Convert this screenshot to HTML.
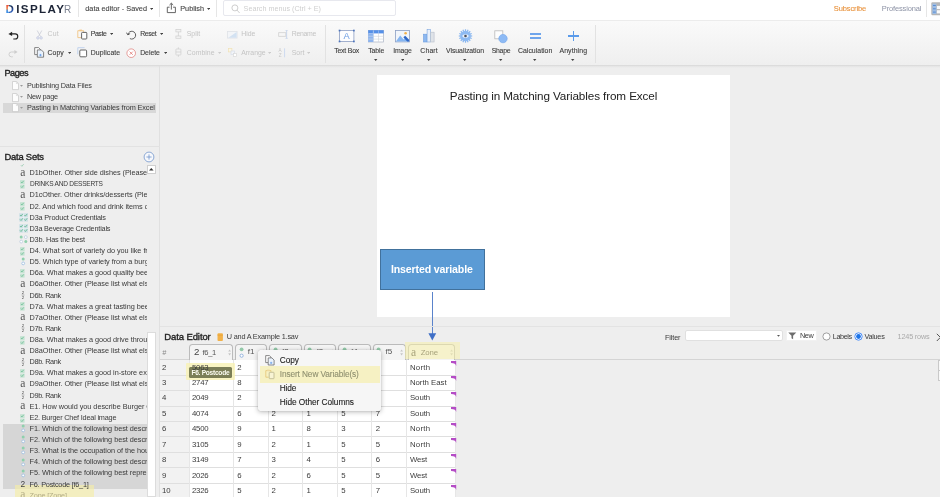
<!DOCTYPE html><html><head><meta charset="utf-8"><title>Displayr - data editor</title><style>
html,body{margin:0;padding:0}
body{width:940px;height:497px;overflow:hidden;position:relative;background:#eeeeee;font-family:"Liberation Sans",sans-serif;}
#r{position:absolute;left:0;top:0;width:940px;height:497px;overflow:hidden;will-change:transform;}
#r div,#r svg,#r span{position:absolute;display:block}
#r span{white-space:pre;}


.m{-webkit-text-stroke:0.1px currentColor}
.h{-webkit-text-stroke:0.35px currentColor}

</style></head><body><div id="r">
<div style="left:0px;top:0px;width:940.00px;height:20.50px;background:#ffffff;"></div>
<div style="left:0px;top:20.2px;width:940.00px;height:1.00px;background:#ececec;"></div>
<div style="left:0px;top:21px;width:940.00px;height:44.30px;background:linear-gradient(#fafafa,#efefef);"></div>
<div style="left:0px;top:65.2px;width:940.00px;height:1.00px;background:#dcdcdc;"></div>
<div style="left:0px;top:66.2px;width:940.00px;height:2.30px;background:linear-gradient(#e4e4e4,#eeeeee);"></div>
<div style="left:77.5px;top:0px;width:1.00px;height:17.00px;background:#e6e6e6;"></div>
<div style="left:158.9px;top:0px;width:1.00px;height:17.00px;background:#e6e6e6;"></div>
<div style="left:215.5px;top:0px;width:1.00px;height:17.00px;background:#e6e6e6;"></div>
<div style="left:926.2px;top:0px;width:1.00px;height:17.00px;background:#e6e6e6;"></div>
<span style="left:5.6px;top:1.45px;font-size:11.6px;line-height:15.1px;color:#1c2436;font-weight:bold;letter-spacing:1.397px;"><span style="position:static;display:inline-block;letter-spacing:0;margin-right:2.22px;background:linear-gradient(#e94f3d 28%,#ef8448 50%,#3d8fe4 64%) left/36% 100% no-repeat,linear-gradient(165deg,#1f9bb5 12%,#1c2c58 38%,#2a55a8 62%,#3c7fe0 90%) right/64% 100% no-repeat;-webkit-background-clip:text;background-clip:text;color:transparent;">D</span>ISPLAY<span style="position:static;display:inline-block;letter-spacing:0;font-weight:normal;color:#7b8190;margin-left:-1.2px;transform:scaleX(0.86);transform-origin:0 50%;">R</span></span>
<svg style="left:149.7px;top:8.45px;" width="3.2" height="1.9" viewBox="0 0 3.2 1.9"><path d="M0 0H3.2L1.6 1.9Z" fill="#444"/></svg>
<svg style="left:206.7px;top:8.45px;" width="3.2" height="1.9" viewBox="0 0 3.2 1.9"><path d="M0 0H3.2L1.6 1.9Z" fill="#444"/></svg>
<svg style="left:166px;top:2px;" width="11" height="12" viewBox="0 0 11 12"><path d="M3.6 5.2H1.3V10.6H9.4V5.2H7.1" fill="none" stroke="#555" stroke-width="0.9"/><path d="M5.35 7.6V1.3M3.5 3L5.35 1.2L7.2 3" fill="none" stroke="#555" stroke-width="0.9"/></svg>
<div style="left:223px;top:0.3px;width:172.50px;height:15.90px;background:#fff;border:1px solid #e7e8ee;border-radius:2px;box-sizing:border-box;"></div>
<svg style="left:230.8px;top:4.2px;" width="10" height="10" viewBox="0 0 10 10"><circle cx="3.9" cy="3.9" r="3" fill="none" stroke="#c2c2c2" stroke-width="0.8"/><path d="M6 6.1L8.6 9" stroke="#c2c2c2" stroke-width="0.8"/></svg>
<svg style="left:931.3px;top:2.2px;" width="9" height="14" viewBox="0 0 9 14"><rect x="0.3" y="0.3" width="10" height="13" rx="1.2" fill="#b6b6b6"/><rect x="1.3" y="1.6" width="4.2" height="10.4" fill="#9fbde3"/><path d="M2 3.5H4.8M2 6.8H4.8M2 10.1H4.8" stroke="#5a8fd6" stroke-width="1"/><rect x="5.9" y="3.9" width="4" height="3.2" fill="#fafafa"/><rect x="5.9" y="8.2" width="4" height="3.2" fill="#fafafa"/></svg>
<div style="left:24.2px;top:24.5px;width:1.00px;height:38.00px;background:#e2e2e2;"></div>
<div style="left:325.2px;top:24.5px;width:1.00px;height:38.00px;background:#e2e2e2;"></div>
<div style="left:595.3px;top:24.5px;width:1.00px;height:38.00px;background:#e2e2e2;"></div>
<svg style="left:8px;top:30.5px;" width="11" height="10" viewBox="0 0 11 10"><path d="M3.6 2.9H7.2A2.55 2.55 0 0 1 7.2 8H5.3" fill="none" stroke="#222" stroke-width="1.15"/><path d="M0.4 2.9L4.1 0.7V5.1Z" fill="#222"/></svg>
<svg style="left:8px;top:49px;" width="11" height="10" viewBox="0 0 11 10"><path d="M6.6 3H3.4A2.4 2.4 0 0 0 3.4 7.8H4.8" fill="none" stroke="#cdcdcd" stroke-width="0.95"/><path d="M9.6 3L6.4 1.1V4.9Z" fill="#cdcdcd"/></svg>
<svg style="left:35.5px;top:30px;" width="7" height="10" viewBox="0 0 7 10"><path d="M1.2 0.5L4.6 6.6M5.8 0.5L2.4 6.6" stroke="#c9ccd6" stroke-width="0.8" fill="none"/><circle cx="1.9" cy="7.9" r="1.3" fill="#dfe3f2" stroke="#c3c9de" stroke-width="0.6"/><circle cx="5.1" cy="7.9" r="1.3" fill="#dfe3f2" stroke="#c3c9de" stroke-width="0.6"/></svg>
<svg style="left:76.5px;top:29.3px;" width="11" height="11" viewBox="0 0 11 11"><path d="M4.2 8.6H0.8V1.7H6.6V3.2" fill="none" stroke="#f1c17c" stroke-width="0.85"/><rect x="2.4" y="0.6" width="2.6" height="1.6" fill="#f5c98a"/><rect x="4.6" y="3.4" width="5.2" height="6.6" rx="0.8" fill="#fff" stroke="#555" stroke-width="0.9"/></svg>
<svg style="left:110.1px;top:33.25px;" width="3.2" height="1.9" viewBox="0 0 3.2 1.9"><path d="M0 0H3.2L1.6 1.9Z" fill="#444"/></svg>
<svg style="left:126.2px;top:29.5px;" width="11" height="10" viewBox="0 0 11 10"><path d="M1.9 4.6A3.9 3.9 0 1 1 3.9 8.6" fill="none" stroke="#444" stroke-width="0.85"/><path d="M0.4 2.6L1.9 4.9L4.1 3.5" fill="none" stroke="#444" stroke-width="0.85"/></svg>
<svg style="left:159.5px;top:33.25px;" width="3.2" height="1.9" viewBox="0 0 3.2 1.9"><path d="M0 0H3.2L1.6 1.9Z" fill="#444"/></svg>
<svg style="left:174.6px;top:29.4px;" width="7" height="10" viewBox="0 0 7 10"><rect x="0.9" y="0.6" width="5" height="2.3" fill="#f3f3f3" stroke="#cfcfcf" stroke-width="0.7"/><rect x="0.9" y="7" width="5" height="2.3" fill="#f3f3f3" stroke="#cfcfcf" stroke-width="0.7"/><path d="M3.4 3V7" stroke="#cfcfcf" stroke-width="0.7"/></svg>
<svg style="left:227px;top:30.7px;" width="11" height="8" viewBox="0 0 11 8"><rect x="0.5" y="0.5" width="9.6" height="6.6" fill="#f3f5f8" stroke="#dfe2e7" stroke-width="0.8"/><path d="M1.4 6.8L9.6 1V6.8Z" fill="#d3e2f2"/></svg>
<svg style="left:277.5px;top:30px;" width="11" height="9" viewBox="0 0 11 9"><path d="M0.6 2.6H7.8V6.4H0.6Z" fill="#f6f6f6" stroke="#d0d0d0" stroke-width="0.8"/><path d="M8.6 0.4V8.4" stroke="#c6d4ea" stroke-width="0.9"/><path d="M7.4 0.4H9.8M7.4 8.4H9.8" stroke="#c6d4ea" stroke-width="0.7"/></svg>
<svg style="left:33.8px;top:47.4px;" width="11" height="11" viewBox="0 0 11 11"><path d="M3 7.6H0.7V0.6H4.6L6.3 2.3V3" fill="#fff" stroke="#666" stroke-width="0.8"/><path d="M3.3 2.9H7.3L9.6 5.2V10.2H3.3Z" fill="#eaf2fc" stroke="#666" stroke-width="0.8"/><path d="M5.2 8.1H7.7M6.45 6.9V9.3" stroke="#5b95e4" stroke-width="0.75"/></svg>
<svg style="left:67.6px;top:52.05px;" width="3.2" height="1.9" viewBox="0 0 3.2 1.9"><path d="M0 0H3.2L1.6 1.9Z" fill="#444"/></svg>
<svg style="left:76.5px;top:47.4px;" width="11" height="11" viewBox="0 0 11 11"><path d="M0.8 7.4V0.7H7.6" fill="none" stroke="#bcd0ee" stroke-width="0.9"/><rect x="2.8" y="3" width="6.8" height="6.8" rx="1" fill="#fff" stroke="#555" stroke-width="0.9"/></svg>
<svg style="left:126.2px;top:47.6px;" width="11" height="11" viewBox="0 0 11 11"><circle cx="5.2" cy="5.2" r="4.3" fill="#fff" stroke="#dc6a66" stroke-width="0.65"/><path d="M3.6 3.6L6.8 6.8M6.8 3.6L3.6 6.8" stroke="#dc6a66" stroke-width="0.7"/></svg>
<svg style="left:163.7px;top:52.05px;" width="3.2" height="1.9" viewBox="0 0 3.2 1.9"><path d="M0 0H3.2L1.6 1.9Z" fill="#444"/></svg>
<svg style="left:174.6px;top:47.4px;" width="7" height="11" viewBox="0 0 7 11"><rect x="0.9" y="2" width="5" height="6" rx="0.6" fill="#f3f3f3" stroke="#cfcfcf" stroke-width="0.7"/><path d="M3.4 0.3V2M3.4 8V9.9M0.9 5H5.9" stroke="#cfcfcf" stroke-width="0.7"/></svg>
<svg style="left:218.1px;top:52.05px;" width="3.2" height="1.9" viewBox="0 0 3.2 1.9"><path d="M0 0H3.2L1.6 1.9Z" fill="#ccc"/></svg>
<svg style="left:228px;top:48.3px;" width="10" height="10" viewBox="0 0 10 10"><rect x="0.5" y="0.5" width="3.4" height="3.4" fill="#fbf5e4" stroke="#f0e2b8" stroke-width="0.7"/><rect x="3" y="3" width="3.6" height="3.6" fill="#f1f4f9" stroke="#d8dde8" stroke-width="0.7"/><rect x="5.4" y="5.4" width="3.2" height="3.2" fill="#fff" stroke="#d8d8d8" stroke-width="0.7"/></svg>
<svg style="left:267.9px;top:52.05px;" width="3.2" height="1.9" viewBox="0 0 3.2 1.9"><path d="M0 0H3.2L1.6 1.9Z" fill="#ccc"/></svg>
<svg style="left:278px;top:47.8px;" width="10" height="10" viewBox="0 0 10 10"><path d="M6.6 0.3V9.3" stroke="#cddaf0" stroke-width="1"/></svg>
<svg style="left:306.9px;top:52.05px;" width="3.2" height="1.9" viewBox="0 0 3.2 1.9"><path d="M0 0H3.2L1.6 1.9Z" fill="#ccc"/></svg>
<svg style="left:374.3px;top:58.7px;" width="3.4" height="2" viewBox="0 0 3.4 2"><path d="M0 0H3.4L1.7 2Z" fill="#444"/></svg>
<svg style="left:400.8px;top:58.7px;" width="3.4" height="2" viewBox="0 0 3.4 2"><path d="M0 0H3.4L1.7 2Z" fill="#444"/></svg>
<svg style="left:427.3px;top:58.7px;" width="3.4" height="2" viewBox="0 0 3.4 2"><path d="M0 0H3.4L1.7 2Z" fill="#444"/></svg>
<svg style="left:463.3px;top:58.7px;" width="3.4" height="2" viewBox="0 0 3.4 2"><path d="M0 0H3.4L1.7 2Z" fill="#444"/></svg>
<svg style="left:499.3px;top:58.7px;" width="3.4" height="2" viewBox="0 0 3.4 2"><path d="M0 0H3.4L1.7 2Z" fill="#444"/></svg>
<svg style="left:533.3px;top:58.7px;" width="3.4" height="2" viewBox="0 0 3.4 2"><path d="M0 0H3.4L1.7 2Z" fill="#444"/></svg>
<svg style="left:571.3px;top:58.7px;" width="3.4" height="2" viewBox="0 0 3.4 2"><path d="M0 0H3.4L1.7 2Z" fill="#444"/></svg>
<svg style="left:338px;top:29px;" width="18" height="15" viewBox="0 0 18 15"><rect x="1.5" y="1.5" width="14.4" height="11" fill="#fdfdfe" stroke="#8d9fc4" stroke-width="0.8"/><rect x="0.7" y="0.7" width="1.7" height="1.7" fill="#4d74bb"/><rect x="15" y="0.7" width="1.7" height="1.7" fill="#4d74bb"/><rect x="0.7" y="11.6" width="1.7" height="1.7" fill="#4d74bb"/><rect x="15" y="11.6" width="1.7" height="1.7" fill="#4d74bb"/></svg>
<svg style="left:368px;top:30px;" width="16" height="13" viewBox="0 0 16 13"><rect x="0.4" y="0.4" width="15.2" height="11.6" fill="#fff" stroke="#a9b2c4" stroke-width="0.7"/><rect x="0.2" y="0.2" width="15.5" height="3.2" fill="#5590e8"/><rect x="0.2" y="3.4" width="5.2" height="8.6" fill="#8cb4ef"/><path d="M0.4 6.3H15.6M0.4 9.1H15.6M10.5 3.4V12" stroke="#cfd3da" stroke-width="0.6"/><path d="M5.4 0.4V12" stroke="#b9cdea" stroke-width="0.6"/><path d="M0.4 6.3H5.4M0.4 9.1H5.4M5.4 0.4V3.4M10.5 0.4V3.4" stroke="#a9c8f4" stroke-width="0.6"/></svg>
<svg style="left:395px;top:30px;" width="16" height="13" viewBox="0 0 16 13"><rect x="0.5" y="0.5" width="14" height="11.4" fill="#f1f5fb" stroke="#8c9fc4" stroke-width="0.8"/><circle cx="10.6" cy="3.2" r="1.3" fill="#f3b24d"/><path d="M0.9 11.5L5.2 5.4L8.6 9.6L10.4 7.6L14.1 11.5Z" fill="#86b6f1"/><path d="M8.4 7.2L10.2 5.8L14.1 9.8V11.5H12.2Z" fill="#2f68c8"/></svg>
<svg style="left:423px;top:29.3px;" width="12" height="14" viewBox="0 0 12 14"><rect x="0.5" y="5.2" width="3.4" height="7.8" fill="#8db8f0" stroke="#6c9de0" stroke-width="0.6"/><rect x="4.1" y="0.6" width="3.4" height="12.4" fill="#e8f0fb" stroke="#7aa5df" stroke-width="0.6"/><rect x="7.7" y="3.2" width="3.4" height="9.8" fill="#dfe3e8" stroke="#b8bfca" stroke-width="0.6"/></svg>
<svg style="left:457.5px;top:29.3px;" width="15" height="14" viewBox="0 0 15 14"><path d="M12.10 7.00L14.20 7.00" stroke="#86b4ee" stroke-width="1.2"/><path d="M11.75 8.76L13.69 9.56" stroke="#86b4ee" stroke-width="1.2"/><path d="M10.75 10.25L12.24 11.74" stroke="#86b4ee" stroke-width="1.2"/><path d="M9.26 11.25L10.06 13.19" stroke="#86b4ee" stroke-width="1.2"/><path d="M7.50 11.60L7.50 13.70" stroke="#86b4ee" stroke-width="1.2"/><path d="M5.74 11.25L4.94 13.19" stroke="#86b4ee" stroke-width="1.2"/><path d="M4.25 10.25L2.76 11.74" stroke="#86b4ee" stroke-width="1.2"/><path d="M3.25 8.76L1.31 9.56" stroke="#86b4ee" stroke-width="1.2"/><path d="M2.90 7.00L0.80 7.00" stroke="#86b4ee" stroke-width="1.2"/><path d="M3.25 5.24L1.31 4.44" stroke="#86b4ee" stroke-width="1.2"/><path d="M4.25 3.75L2.76 2.26" stroke="#86b4ee" stroke-width="1.2"/><path d="M5.74 2.75L4.94 0.81" stroke="#86b4ee" stroke-width="1.2"/><path d="M7.50 2.40L7.50 0.30" stroke="#86b4ee" stroke-width="1.2"/><path d="M9.26 2.75L10.06 0.81" stroke="#86b4ee" stroke-width="1.2"/><path d="M10.75 3.75L12.24 2.26" stroke="#86b4ee" stroke-width="1.2"/><path d="M11.75 5.24L13.69 4.44" stroke="#86b4ee" stroke-width="1.2"/><circle cx="7.5" cy="7" r="5.3" fill="#8dbaf2"/><ellipse cx="7.5" cy="7" rx="3.1" ry="1.8" fill="#e9f1fc"/><circle cx="7.5" cy="7" r="1.3" fill="#4a4f5a"/></svg>
<svg style="left:494px;top:29.6px;" width="15" height="14" viewBox="0 0 15 14"><rect x="0.8" y="0.8" width="8" height="8" fill="#fdfdfd" stroke="#b9b9b9" stroke-width="0.8"/><circle cx="9" cy="8.6" r="4.2" fill="#8dbaf5" stroke="#6fa3ea" stroke-width="0.6"/></svg>
<div style="left:529.7px;top:33.4px;width:11.50px;height:1.50px;background:#6fa5ec;"></div>
<div style="left:529.7px;top:37.2px;width:11.50px;height:1.50px;background:#6fa5ec;"></div>
<div style="left:568px;top:35.0px;width:10.70px;height:1.70px;background:#5b9bea;"></div>
<div style="left:572.5px;top:30.6px;width:1.70px;height:10.50px;background:#5b9bea;"></div>
<div style="left:159.3px;top:66px;width:1.00px;height:431.00px;background:#e0e0e0;"></div>
<div style="left:0px;top:146.2px;width:159.50px;height:1.00px;background:#e2e2e2;"></div>
<div style="left:3px;top:102.6px;width:152.60px;height:10.10px;background:#d8d8d8;"></div>
<svg style="left:12px;top:81.39999999999999px;" width="7" height="10" viewBox="0 0 7 10"><path d="M0.5 0.5H4.6L6.5 2.4V8.6H0.5Z" fill="#fdfdfd" stroke="#c6c6c6" stroke-width="0.7"/><path d="M4.4 0.7V2.6H6.3" fill="none" stroke="#cfcfcf" stroke-width="0.6"/></svg>
<svg style="left:20.1px;top:85.2px;" width="3" height="1.8" viewBox="0 0 3 1.8"><path d="M0 0H3L1.5 1.8Z" fill="#9a9a9a"/></svg>
<svg style="left:12px;top:92.6px;" width="7" height="10" viewBox="0 0 7 10"><path d="M0.5 0.5H4.6L6.5 2.4V8.6H0.5Z" fill="#fdfdfd" stroke="#c6c6c6" stroke-width="0.7"/><path d="M4.4 0.7V2.6H6.3" fill="none" stroke="#cfcfcf" stroke-width="0.6"/></svg>
<svg style="left:20.1px;top:96.4px;" width="3" height="1.8" viewBox="0 0 3 1.8"><path d="M0 0H3L1.5 1.8Z" fill="#9a9a9a"/></svg>
<svg style="left:12px;top:103.3px;" width="7" height="10" viewBox="0 0 7 10"><path d="M0.5 0.5H4.6L6.5 2.4V8.6H0.5Z" fill="#fdfdfd" stroke="#c6c6c6" stroke-width="0.7"/><path d="M4.4 0.7V2.6H6.3" fill="none" stroke="#cfcfcf" stroke-width="0.6"/></svg>
<svg style="left:20.1px;top:107.1px;" width="3" height="1.8" viewBox="0 0 3 1.8"><path d="M0 0H3L1.5 1.8Z" fill="#9a9a9a"/></svg>
<svg style="left:143.3px;top:150.8px;" width="12" height="12" viewBox="0 0 12 12"><circle cx="6" cy="6" r="4.9" fill="#f6f8fc" stroke="#6a8fc8" stroke-width="0.75"/><path d="M3.4 6H8.6M6 3.4V8.6" stroke="#6a8fc8" stroke-width="0.75"/></svg>
<div style="left:146.9px;top:164.7px;width:8.80px;height:9.30px;background:#fff;border:1px solid #cfcfcf;box-sizing:border-box;"></div>
<svg style="left:149.0px;top:167.9px;" width="5" height="3" viewBox="0 0 5 3"><path d="M0 2.6L2.3 0L4.6 2.6Z" fill="#333"/></svg>
<div style="left:146.8px;top:332.3px;width:8.80px;height:165.20px;background:#fff;border:1px solid #dcdcdc;box-sizing:border-box;"></div>
<div style="left:3px;top:423.7px;width:143.80px;height:65.80px;background:#d6d6d6;"></div>
<div style="left:14.5px;top:485.2px;width:79.00px;height:12.30px;background:rgba(246,238,161,0.6);"></div>
<svg style="left:20.4px;top:163.8px;" width="5" height="3" viewBox="0 0 5 3"><path d="M0.9 1.2L1.9 2.3L3.7 0.1" stroke="#8cc7a8" stroke-width="0.7" fill="none"/></svg>
<svg style="left:20.4px;top:180.01999999999998px;" width="5" height="9" viewBox="0 0 5 9"><rect x="0.1" y="0.1" width="4.5" height="4" fill="#c6e3d3"/><rect x="0.1" y="4.6" width="4.5" height="4" fill="#c6e3d3"/><path d="M0.9 1.9L1.9 3L3.7 0.8M0.9 6.5L1.9 7.6L3.7 5.4" stroke="#6fbf97" stroke-width="0.8" fill="none"/></svg>
<svg style="left:20.4px;top:202.26px;" width="5" height="9" viewBox="0 0 5 9"><rect x="0.1" y="0.1" width="4.5" height="4" fill="#c6e3d3"/><rect x="0.1" y="4.6" width="4.5" height="4" fill="#c6e3d3"/><path d="M0.9 1.9L1.9 3L3.7 0.8M0.9 6.5L1.9 7.6L3.7 5.4" stroke="#6fbf97" stroke-width="0.8" fill="none"/></svg>
<svg style="left:18.6px;top:212.77999999999997px;" width="10" height="9" viewBox="0 0 10 9"><rect x="0.2" y="0.2" width="8.8" height="8.4" fill="#cfe0e6"/><path d="M0.2 4.4H9M4.6 0.2V8.6" stroke="#eef3f5" stroke-width="0.7"/><path d="M1 2L2 3.1L3.8 0.9M5.4 2L6.4 3.1L8.2 0.9M1 6.4L2 7.5L3.8 5.3M5.4 6.4L6.4 7.5L8.2 5.3" stroke="#5cb88a" stroke-width="0.8" fill="none"/></svg>
<svg style="left:18.6px;top:223.89999999999998px;" width="10" height="9" viewBox="0 0 10 9"><rect x="0.2" y="0.2" width="8.8" height="8.4" fill="#cfe0e6"/><path d="M0.2 4.4H9M4.6 0.2V8.6" stroke="#eef3f5" stroke-width="0.7"/><path d="M1 2L2 3.1L3.8 0.9M5.4 2L6.4 3.1L8.2 0.9M1 6.4L2 7.5L3.8 5.3M5.4 6.4L6.4 7.5L8.2 5.3" stroke="#5cb88a" stroke-width="0.8" fill="none"/></svg>
<svg style="left:18.6px;top:235.01999999999998px;" width="10" height="9" viewBox="0 0 10 9"><circle cx="2.2" cy="2.1" r="1.5" fill="#8fd0ad"/><circle cx="6.8" cy="2.1" r="1.4" fill="#fff" stroke="#a9bfd8" stroke-width="0.6"/><circle cx="2.2" cy="6.6" r="1.4" fill="#fff" stroke="#a9bfd8" stroke-width="0.6"/><circle cx="6.8" cy="6.6" r="1.5" fill="#8fd0ad"/></svg>
<svg style="left:20.4px;top:246.73999999999995px;" width="5" height="9" viewBox="0 0 5 9"><rect x="0.1" y="0.1" width="4.5" height="4" fill="#c6e3d3"/><rect x="0.1" y="4.6" width="4.5" height="4" fill="#c6e3d3"/><path d="M0.9 1.9L1.9 3L3.7 0.8M0.9 6.5L1.9 7.6L3.7 5.4" stroke="#6fbf97" stroke-width="0.8" fill="none"/></svg>
<svg style="left:20.6px;top:257.35999999999996px;" width="5" height="9" viewBox="0 0 5 9"><circle cx="2.2" cy="1.9" r="1.5" fill="#8fd0ad"/><circle cx="2.2" cy="6.4" r="1.4" fill="#fff" stroke="#8fb4dc" stroke-width="0.7"/></svg>
<svg style="left:20.4px;top:268.97999999999996px;" width="5" height="9" viewBox="0 0 5 9"><rect x="0.1" y="0.1" width="4.5" height="4" fill="#c6e3d3"/><rect x="0.1" y="4.6" width="4.5" height="4" fill="#c6e3d3"/><path d="M0.9 1.9L1.9 3L3.7 0.8M0.9 6.5L1.9 7.6L3.7 5.4" stroke="#6fbf97" stroke-width="0.8" fill="none"/></svg>
<svg style="left:20px;top:290.02px;" width="6" height="10" viewBox="0 0 6 10"><text x="1.7" y="4.1" font-size="4.4" fill="#444">2</text><path d="M1.6 5H4.4" stroke="#777" stroke-width="0.55"/><text x="1.7" y="9.3" font-size="4.4" fill="#444">2</text></svg>
<svg style="left:20.4px;top:302.34px;" width="5" height="9" viewBox="0 0 5 9"><rect x="0.1" y="0.1" width="4.5" height="4" fill="#c6e3d3"/><rect x="0.1" y="4.6" width="4.5" height="4" fill="#c6e3d3"/><path d="M0.9 1.9L1.9 3L3.7 0.8M0.9 6.5L1.9 7.6L3.7 5.4" stroke="#6fbf97" stroke-width="0.8" fill="none"/></svg>
<svg style="left:20px;top:323.38px;" width="6" height="10" viewBox="0 0 6 10"><text x="1.7" y="4.1" font-size="4.4" fill="#444">2</text><path d="M1.6 5H4.4" stroke="#777" stroke-width="0.55"/><text x="1.7" y="9.3" font-size="4.4" fill="#444">2</text></svg>
<svg style="left:20.4px;top:335.7px;" width="5" height="9" viewBox="0 0 5 9"><rect x="0.1" y="0.1" width="4.5" height="4" fill="#c6e3d3"/><rect x="0.1" y="4.6" width="4.5" height="4" fill="#c6e3d3"/><path d="M0.9 1.9L1.9 3L3.7 0.8M0.9 6.5L1.9 7.6L3.7 5.4" stroke="#6fbf97" stroke-width="0.8" fill="none"/></svg>
<svg style="left:20px;top:356.74px;" width="6" height="10" viewBox="0 0 6 10"><text x="1.7" y="4.1" font-size="4.4" fill="#444">2</text><path d="M1.6 5H4.4" stroke="#777" stroke-width="0.55"/><text x="1.7" y="9.3" font-size="4.4" fill="#444">2</text></svg>
<svg style="left:20.4px;top:369.06px;" width="5" height="9" viewBox="0 0 5 9"><rect x="0.1" y="0.1" width="4.5" height="4" fill="#c6e3d3"/><rect x="0.1" y="4.6" width="4.5" height="4" fill="#c6e3d3"/><path d="M0.9 1.9L1.9 3L3.7 0.8M0.9 6.5L1.9 7.6L3.7 5.4" stroke="#6fbf97" stroke-width="0.8" fill="none"/></svg>
<svg style="left:20px;top:390.1px;" width="6" height="10" viewBox="0 0 6 10"><text x="1.7" y="4.1" font-size="4.4" fill="#444">2</text><path d="M1.6 5H4.4" stroke="#777" stroke-width="0.55"/><text x="1.7" y="9.3" font-size="4.4" fill="#444">2</text></svg>
<svg style="left:20.4px;top:413.53999999999996px;" width="5" height="9" viewBox="0 0 5 9"><rect x="0.1" y="0.1" width="4.5" height="4" fill="#c6e3d3"/><rect x="0.1" y="4.6" width="4.5" height="4" fill="#c6e3d3"/><path d="M0.9 1.9L1.9 3L3.7 0.8M0.9 6.5L1.9 7.6L3.7 5.4" stroke="#6fbf97" stroke-width="0.8" fill="none"/></svg>
<svg style="left:20.6px;top:424.15999999999997px;" width="5" height="9" viewBox="0 0 5 9"><circle cx="2.2" cy="1.9" r="1.5" fill="#8fd0ad"/><circle cx="2.2" cy="6.4" r="1.4" fill="#fff" stroke="#8fb4dc" stroke-width="0.7"/></svg>
<svg style="left:20.6px;top:435.28px;" width="5" height="9" viewBox="0 0 5 9"><circle cx="2.2" cy="1.9" r="1.5" fill="#8fd0ad"/><circle cx="2.2" cy="6.4" r="1.4" fill="#fff" stroke="#8fb4dc" stroke-width="0.7"/></svg>
<svg style="left:20.6px;top:446.4px;" width="5" height="9" viewBox="0 0 5 9"><circle cx="2.2" cy="1.9" r="1.5" fill="#8fd0ad"/><circle cx="2.2" cy="6.4" r="1.4" fill="#fff" stroke="#8fb4dc" stroke-width="0.7"/></svg>
<svg style="left:20.6px;top:457.52px;" width="5" height="9" viewBox="0 0 5 9"><circle cx="2.2" cy="1.9" r="1.5" fill="#8fd0ad"/><circle cx="2.2" cy="6.4" r="1.4" fill="#fff" stroke="#8fb4dc" stroke-width="0.7"/></svg>
<svg style="left:20.6px;top:468.63999999999993px;" width="5" height="9" viewBox="0 0 5 9"><circle cx="2.2" cy="1.9" r="1.5" fill="#8fd0ad"/><circle cx="2.2" cy="6.4" r="1.4" fill="#fff" stroke="#8fb4dc" stroke-width="0.7"/></svg>
<div style="left:376.6px;top:74.9px;width:353.60px;height:242.00px;background:#ffffff;"></div>
<div style="left:380px;top:248.9px;width:105.10px;height:41.00px;background:#5b9bd5;border:1px solid #41719c;box-sizing:border-box;"></div>
<div style="left:432.0px;top:291.5px;width:1.00px;height:42.50px;background:#5a83cb;"></div>
<svg style="left:428px;top:332.6px;" width="9" height="8" viewBox="0 0 9 8"><path d="M0.4 0.3H8.2L4.3 7.5Z" fill="#3f6fc6"/></svg>
<div style="left:160.3px;top:325.7px;width:779.70px;height:1.20px;background:#e3e3e3;"></div>
<svg style="left:216.8px;top:332.8px;" width="7" height="9" viewBox="0 0 7 9"><rect x="0.5" y="0.3" width="5.4" height="7.7" rx="0.9" fill="#f2b24a"/><path d="M0.5 2.2H5.9" stroke="#e09a2c" stroke-width="0.5"/></svg>
<div style="left:684.6px;top:330px;width:98.80px;height:11.30px;background:#fff;border:1px solid #e0e0e0;border-radius:2px;box-sizing:border-box;"></div>
<svg style="left:776.5px;top:335.3px;" width="3" height="1.8" viewBox="0 0 3 1.8"><path d="M0 0H3L1.5 1.8Z" fill="#555"/></svg>
<div style="left:785.9px;top:330.4px;width:31.00px;height:10.50px;background:#fff;border:1px solid #f1f1f1;box-sizing:border-box;"></div>
<svg style="left:787.8px;top:331.8px;" width="9" height="8" viewBox="0 0 9 8"><path d="M0.3 0.4H8.3L5.1 3.7V7.2L3.5 6.2V3.7Z" fill="#6c6c6c"/></svg>
<svg style="left:821.8px;top:332.2px;" width="9" height="9" viewBox="0 0 9 9"><circle cx="4.5" cy="4.5" r="3.6" fill="#fff" stroke="#8a8a8a" stroke-width="0.8"/></svg>
<svg style="left:854.1px;top:332.2px;" width="9" height="9" viewBox="0 0 9 9"><circle cx="4.5" cy="4.5" r="3.7" fill="#fff" stroke="#3b82f6" stroke-width="0.9"/><circle cx="4.5" cy="4.5" r="2.4" fill="#1a73e8"/></svg>
<svg style="left:935.5px;top:332.5px;" width="5" height="9" viewBox="0 0 5 9"><path d="M0.8 0.8L4.4 4.4L0.8 8" fill="none" stroke="#444" stroke-width="0.9"/></svg>
<div style="left:160.3px;top:359.7px;width:28.90px;height:137.80px;background:#f2f2f2;"></div>
<div style="left:189.2px;top:359.7px;width:266.60px;height:137.80px;background:#ffffff;"></div>
<div style="left:160.3px;top:359.2px;width:779.70px;height:1.00px;background:#d4d4d4;"></div>
<div style="left:160.3px;top:374.65px;width:295.50px;height:1.00px;background:#dfdfdf;"></div>
<div style="left:160.3px;top:390.09999999999997px;width:295.50px;height:1.00px;background:#dfdfdf;"></div>
<div style="left:160.3px;top:405.54999999999995px;width:295.50px;height:1.00px;background:#dfdfdf;"></div>
<div style="left:160.3px;top:421.0px;width:295.50px;height:1.00px;background:#dfdfdf;"></div>
<div style="left:160.3px;top:436.45px;width:295.50px;height:1.00px;background:#dfdfdf;"></div>
<div style="left:160.3px;top:451.9px;width:295.50px;height:1.00px;background:#dfdfdf;"></div>
<div style="left:160.3px;top:467.34999999999997px;width:295.50px;height:1.00px;background:#dfdfdf;"></div>
<div style="left:160.3px;top:482.79999999999995px;width:295.50px;height:1.00px;background:#dfdfdf;"></div>
<div style="left:160.3px;top:498.25px;width:295.50px;height:1.00px;background:#dfdfdf;"></div>
<div style="left:188.7px;top:359.7px;width:1.00px;height:137.80px;background:#e6e6e6;"></div>
<div style="left:233.3px;top:359.7px;width:1.00px;height:137.80px;background:#e6e6e6;"></div>
<div style="left:267.5px;top:359.7px;width:1.00px;height:137.80px;background:#e6e6e6;"></div>
<div style="left:302.0px;top:359.7px;width:1.00px;height:137.80px;background:#e6e6e6;"></div>
<div style="left:336.5px;top:359.7px;width:1.00px;height:137.80px;background:#e6e6e6;"></div>
<div style="left:371.0px;top:359.7px;width:1.00px;height:137.80px;background:#e6e6e6;"></div>
<div style="left:405.8px;top:359.7px;width:1.00px;height:137.80px;background:#e6e6e6;"></div>
<div style="left:455.3px;top:359.7px;width:1.00px;height:137.80px;background:#e6e6e6;"></div>
<div style="left:937.6px;top:360px;width:3.40px;height:20.50px;background:#f8f8f8;border:1px solid #c9c9c9;box-sizing:border-box;"></div>
<div style="left:937.6px;top:369.5px;width:3.40px;height:0.80px;background:#c9c9c9;"></div>
<div style="left:189.29999999999998px;top:344.3px;width:43.80px;height:15.70px;background:#f4f4f4;border:1.3px solid #bbbbbb;border-bottom:none;border-radius:3.5px 3.5px 0 0;box-sizing:border-box;"></div>
<svg style="left:227.6px;top:349.2px;" width="4" height="7" viewBox="0 0 4 7"><path d="M0.2 2.6L1.6 0.4L3 2.6ZM0.2 4.2L1.6 6.4L3 4.2Z" fill="#c6c6c6"/></svg>
<div style="left:235.0px;top:344.3px;width:32.30px;height:15.70px;background:#f4f4f4;border:1.3px solid #bbbbbb;border-bottom:none;border-radius:3.5px 3.5px 0 0;box-sizing:border-box;"></div>
<svg style="left:261.8px;top:349.2px;" width="4" height="7" viewBox="0 0 4 7"><path d="M0.2 2.6L1.6 0.4L3 2.6ZM0.2 4.2L1.6 6.4L3 4.2Z" fill="#c6c6c6"/></svg>
<svg style="left:238.5px;top:346.90000000000003px;" width="6" height="12" viewBox="0 0 6 12"><circle cx="2.6" cy="2.3" r="1.9" fill="#93c9a9"/><circle cx="2.6" cy="8.7" r="1.6" fill="#fff" stroke="#86a9d8" stroke-width="0.85"/></svg>
<div style="left:269.2px;top:344.3px;width:32.60px;height:15.70px;background:#f4f4f4;border:1.3px solid #bbbbbb;border-bottom:none;border-radius:3.5px 3.5px 0 0;box-sizing:border-box;"></div>
<svg style="left:296.3px;top:349.2px;" width="4" height="7" viewBox="0 0 4 7"><path d="M0.2 2.6L1.6 0.4L3 2.6ZM0.2 4.2L1.6 6.4L3 4.2Z" fill="#c6c6c6"/></svg>
<svg style="left:272.7px;top:346.90000000000003px;" width="6" height="12" viewBox="0 0 6 12"><circle cx="2.6" cy="2.3" r="1.9" fill="#93c9a9"/><circle cx="2.6" cy="8.7" r="1.6" fill="#fff" stroke="#86a9d8" stroke-width="0.85"/></svg>
<div style="left:303.7px;top:344.3px;width:32.60px;height:15.70px;background:#f4f4f4;border:1.3px solid #bbbbbb;border-bottom:none;border-radius:3.5px 3.5px 0 0;box-sizing:border-box;"></div>
<svg style="left:330.8px;top:349.2px;" width="4" height="7" viewBox="0 0 4 7"><path d="M0.2 2.6L1.6 0.4L3 2.6ZM0.2 4.2L1.6 6.4L3 4.2Z" fill="#c6c6c6"/></svg>
<svg style="left:307.2px;top:346.90000000000003px;" width="6" height="12" viewBox="0 0 6 12"><circle cx="2.6" cy="2.3" r="1.9" fill="#93c9a9"/><circle cx="2.6" cy="8.7" r="1.6" fill="#fff" stroke="#86a9d8" stroke-width="0.85"/></svg>
<div style="left:338.2px;top:344.3px;width:32.60px;height:15.70px;background:#f4f4f4;border:1.3px solid #bbbbbb;border-bottom:none;border-radius:3.5px 3.5px 0 0;box-sizing:border-box;"></div>
<svg style="left:365.3px;top:349.2px;" width="4" height="7" viewBox="0 0 4 7"><path d="M0.2 2.6L1.6 0.4L3 2.6ZM0.2 4.2L1.6 6.4L3 4.2Z" fill="#c6c6c6"/></svg>
<svg style="left:341.7px;top:346.90000000000003px;" width="6" height="12" viewBox="0 0 6 12"><circle cx="2.6" cy="2.3" r="1.9" fill="#93c9a9"/><circle cx="2.6" cy="8.7" r="1.6" fill="#fff" stroke="#86a9d8" stroke-width="0.85"/></svg>
<div style="left:372.7px;top:344.3px;width:32.90px;height:15.70px;background:#f4f4f4;border:1.3px solid #bbbbbb;border-bottom:none;border-radius:3.5px 3.5px 0 0;box-sizing:border-box;"></div>
<svg style="left:400.1px;top:349.2px;" width="4" height="7" viewBox="0 0 4 7"><path d="M0.2 2.6L1.6 0.4L3 2.6ZM0.2 4.2L1.6 6.4L3 4.2Z" fill="#c6c6c6"/></svg>
<svg style="left:376.2px;top:346.90000000000003px;" width="6" height="12" viewBox="0 0 6 12"><circle cx="2.6" cy="2.3" r="1.9" fill="#93c9a9"/><circle cx="2.6" cy="8.7" r="1.6" fill="#fff" stroke="#86a9d8" stroke-width="0.85"/></svg>
<div style="left:407.5px;top:344.3px;width:47.60px;height:15.70px;background:#f4f4f4;border:1.3px solid #bbbbbb;border-bottom:none;border-radius:3.5px 3.5px 0 0;box-sizing:border-box;"></div>
<svg style="left:449.6px;top:349.2px;" width="4" height="7" viewBox="0 0 4 7"><path d="M0.2 2.6L1.6 0.4L3 2.6ZM0.2 4.2L1.6 6.4L3 4.2Z" fill="#c6c6c6"/></svg>
<svg style="left:450.5px;top:361.0px;" width="6" height="6" viewBox="0 0 6 6"><path d="M0 0H5.2V4.9C4.9 3 3.4 2.1 0 1.9Z" fill="#b54cc6"/></svg>
<svg style="left:450.5px;top:376.45px;" width="6" height="6" viewBox="0 0 6 6"><path d="M0 0H5.2V4.9C4.9 3 3.4 2.1 0 1.9Z" fill="#b54cc6"/></svg>
<svg style="left:450.5px;top:391.9px;" width="6" height="6" viewBox="0 0 6 6"><path d="M0 0H5.2V4.9C4.9 3 3.4 2.1 0 1.9Z" fill="#b54cc6"/></svg>
<svg style="left:450.5px;top:407.35px;" width="6" height="6" viewBox="0 0 6 6"><path d="M0 0H5.2V4.9C4.9 3 3.4 2.1 0 1.9Z" fill="#b54cc6"/></svg>
<svg style="left:450.5px;top:422.8px;" width="6" height="6" viewBox="0 0 6 6"><path d="M0 0H5.2V4.9C4.9 3 3.4 2.1 0 1.9Z" fill="#b54cc6"/></svg>
<svg style="left:450.5px;top:438.25px;" width="6" height="6" viewBox="0 0 6 6"><path d="M0 0H5.2V4.9C4.9 3 3.4 2.1 0 1.9Z" fill="#b54cc6"/></svg>
<svg style="left:450.5px;top:453.7px;" width="6" height="6" viewBox="0 0 6 6"><path d="M0 0H5.2V4.9C4.9 3 3.4 2.1 0 1.9Z" fill="#b54cc6"/></svg>
<svg style="left:450.5px;top:469.15px;" width="6" height="6" viewBox="0 0 6 6"><path d="M0 0H5.2V4.9C4.9 3 3.4 2.1 0 1.9Z" fill="#b54cc6"/></svg>
<svg style="left:450.5px;top:484.6px;" width="6" height="6" viewBox="0 0 6 6"><path d="M0 0H5.2V4.9C4.9 3 3.4 2.1 0 1.9Z" fill="#b54cc6"/></svg>
<div style="left:405.2px;top:342.2px;width:55.30px;height:17.00px;background:rgba(247,240,170,0.55);"></div>
<div style="left:185.6px;top:363.3px;width:49.90px;height:16.90px;background:rgba(248,242,175,0.75);border-radius:1px;"></div>
<div style="left:188.8px;top:366.9px;width:43.30px;height:10.80px;background:#7c7f57;border-radius:1.5px;"></div>
<div style="left:258.3px;top:350.3px;width:122.60px;height:60.60px;background:#f6f6f6;border-radius:2.5px;box-shadow:0 1px 5px rgba(0,0,0,0.28),0 0 1px rgba(0,0,0,0.25);z-index:5;"></div>
<div style="left:260.4px;top:365.6px;width:119.80px;height:17.60px;background:#f6f1c3;z-index:6;"></div>
<svg style="left:264.6px;top:354.6px;z-index:7;" width="10" height="11" viewBox="0 0 10 11"><path d="M3 7.6H0.7V0.6H4.4L6 2.2V3" fill="#fff" stroke="#666" stroke-width="0.75"/><path d="M3.2 2.9H6.9L9.1 5.1V10H3.2Z" fill="#eaf2fc" stroke="#666" stroke-width="0.75"/><path d="M5 7.9H7.3M6.15 6.8V9" stroke="#5b95e4" stroke-width="0.7"/></svg>
<svg style="left:264.6px;top:368.6px;z-index:7;" width="10" height="11" viewBox="0 0 10 11"><path d="M3.6 8.2H0.8V1.6H6V2.8" fill="none" stroke="#e6c878" stroke-width="0.85"/><rect x="2.1" y="0.6" width="2.6" height="1.5" fill="#eed9a0"/><rect x="4.2" y="3.3" width="4.8" height="6.4" rx="0.6" fill="#f8f4d4" stroke="#b9b48a" stroke-width="0.8"/></svg>
<span class="m" style="left:85.3px;top:3.85px;font-size:7.3px;line-height:9.5px;color:#444;letter-spacing:0.002px;">data editor - Saved</span>
<span class="m" style="left:180.3px;top:3.85px;font-size:7.3px;line-height:9.5px;color:#444;letter-spacing:-0.040px;">Publish</span>
<span style="left:243.6px;top:4.30px;font-size:7.2px;line-height:9.4px;color:#cfcfcf;letter-spacing:0.005px;">Search menus (Ctrl + E)</span>
<span class="m" style="left:833.8px;top:4.00px;font-size:7.5px;line-height:9.8px;color:#e8923c;letter-spacing:-0.107px;">Subscribe</span>
<span style="left:881.8px;top:4.00px;font-size:7.5px;line-height:9.8px;color:#8d93a6;letter-spacing:-0.144px;">Professional</span>
<span style="left:47.6px;top:29.40px;font-size:6.9px;line-height:9.0px;color:#c4c4c4;letter-spacing:0.133px;">Cut</span>
<span class="m" style="left:90.7px;top:29.40px;font-size:6.9px;line-height:9.0px;color:#3a3a3a;letter-spacing:-0.381px;">Paste</span>
<span class="m" style="left:140.2px;top:29.40px;font-size:6.9px;line-height:9.0px;color:#3a3a3a;letter-spacing:-0.404px;">Reset</span>
<span style="left:186.8px;top:29.40px;font-size:6.9px;line-height:9.0px;color:#c4c4c4;letter-spacing:-0.027px;">Split</span>
<span style="left:241.2px;top:29.40px;font-size:6.9px;line-height:9.0px;color:#c4c4c4;letter-spacing:0.009px;">Hide</span>
<span style="left:291.8px;top:29.40px;font-size:6.9px;line-height:9.0px;color:#c4c4c4;letter-spacing:-0.309px;">Rename</span>
<span class="m" style="left:47.6px;top:48.20px;font-size:6.9px;line-height:9.0px;color:#3a3a3a;letter-spacing:0.002px;">Copy</span>
<span class="m" style="left:90.7px;top:48.20px;font-size:6.9px;line-height:9.0px;color:#3a3a3a;letter-spacing:0.096px;">Duplicate</span>
<span class="m" style="left:140.2px;top:48.20px;font-size:6.9px;line-height:9.0px;color:#3a3a3a;letter-spacing:-0.044px;">Delete</span>
<span style="left:186.8px;top:48.20px;font-size:6.9px;line-height:9.0px;color:#c4c4c4;letter-spacing:0.020px;">Combine</span>
<span style="left:241.2px;top:48.20px;font-size:6.9px;line-height:9.0px;color:#c4c4c4;letter-spacing:-0.003px;">Arrange</span>
<span style="left:278.6px;top:48.20px;font-size:4.6px;line-height:6.0px;color:#c8c8c8;">A</span>
<span style="left:278.8px;top:53.20px;font-size:4.6px;line-height:6.0px;color:#c8c8c8;">Z</span>
<span style="left:291.8px;top:48.20px;font-size:6.9px;line-height:9.0px;color:#c4c4c4;letter-spacing:-0.047px;">Sort</span>
<span class="m" style="left:334.2px;top:46.20px;font-size:6.9px;line-height:9.0px;color:#3a3a3a;letter-spacing:-0.191px;">Text Box</span>
<span class="m" style="left:368.2px;top:46.20px;font-size:6.9px;line-height:9.0px;color:#3a3a3a;letter-spacing:-0.096px;">Table</span>
<span class="m" style="left:393.2px;top:46.20px;font-size:6.9px;line-height:9.0px;color:#3a3a3a;letter-spacing:-0.139px;">Image</span>
<span class="m" style="left:420.3px;top:46.20px;font-size:6.9px;line-height:9.0px;color:#3a3a3a;letter-spacing:0.135px;">Chart</span>
<span class="m" style="left:446px;top:46.20px;font-size:6.9px;line-height:9.0px;color:#3a3a3a;letter-spacing:-0.039px;">Visualization</span>
<span class="m" style="left:491.7px;top:46.20px;font-size:6.9px;line-height:9.0px;color:#3a3a3a;letter-spacing:-0.259px;">Shape</span>
<span class="m" style="left:518px;top:46.20px;font-size:6.9px;line-height:9.0px;color:#3a3a3a;letter-spacing:0.021px;">Calculation</span>
<span class="m" style="left:559.5px;top:46.20px;font-size:6.9px;line-height:9.0px;color:#3a3a3a;letter-spacing:0.096px;">Anything</span>
<span style="top:30.35px;font-size:9.3px;line-height:12.1px;color:#6b9ce2;left:343.5px;">A</span>
<span class="h" style="left:4.4px;top:67.10px;font-size:9.2px;line-height:12.0px;color:#222;letter-spacing:-0.491px;">Pages</span>
<span style="left:27px;top:80.55px;font-size:7.3px;line-height:9.5px;color:#3a3a3a;letter-spacing:-0.177px;">Publishing Data Files</span>
<span style="left:27px;top:91.75px;font-size:7.3px;line-height:9.5px;color:#3a3a3a;letter-spacing:-0.266px;">New page</span>
<span style="left:27px;top:103.45px;font-size:7.3px;line-height:9.5px;color:#3a3a3a;letter-spacing:-0.105px;">Pasting in Matching Variables from Excel</span>
<span class="h" style="left:4.4px;top:151.10px;font-size:9.4px;line-height:12.2px;color:#222;letter-spacing:-0.196px;">Data Sets</span>
<span style="left:20.3px;top:165.20px;font-size:11.5px;line-height:15.0px;color:#555;font-family:Liberation Serif,serif;">a</span>
<span style="left:29.5px;top:167.95px;font-size:7.3px;line-height:9.5px;color:#3a3a3a;width:117.3px;overflow:hidden;letter-spacing:-0.035px;">D1bOther. Other side dishes (Please specify)</span>
<span class="li" style="left:29.5px;top:179.07px;font-size:7.3px;line-height:9.5px;color:#3a3a3a;letter-spacing:-0.262px;transform:scaleX(0.9);transform-origin:0 50%;">DRINKS AND DESSERTS</span>
<span style="left:20.3px;top:187.44px;font-size:11.5px;line-height:15.0px;color:#555;font-family:Liberation Serif,serif;">a</span>
<span style="left:29.5px;top:190.19px;font-size:7.3px;line-height:9.5px;color:#3a3a3a;width:117.3px;overflow:hidden;letter-spacing:-0.035px;">D1cOther. Other drinks/desserts (Please specify)</span>
<span style="left:29.5px;top:202.31px;font-size:7.3px;line-height:9.5px;color:#3a3a3a;width:117.3px;overflow:hidden;letter-spacing:-0.035px;">D2. And which food and drink items do you</span>
<span class="li" style="left:29.5px;top:213.43px;font-size:7.3px;line-height:9.5px;color:#3a3a3a;letter-spacing:-0.136px;">D3a Product Credentials</span>
<span class="li" style="left:29.5px;top:223.55px;font-size:7.3px;line-height:9.5px;color:#3a3a3a;letter-spacing:-0.200px;">D3a Beverage Credentials</span>
<span class="li" style="left:29.5px;top:234.67px;font-size:7.3px;line-height:9.5px;color:#3a3a3a;letter-spacing:-0.176px;">D3b. Has the best</span>
<span style="left:29.5px;top:245.79px;font-size:7.3px;line-height:9.5px;color:#3a3a3a;width:117.3px;overflow:hidden;letter-spacing:-0.035px;">D4. What sort of variety do you like from</span>
<span style="left:29.5px;top:256.91px;font-size:7.3px;line-height:9.5px;color:#3a3a3a;width:117.3px;overflow:hidden;letter-spacing:-0.035px;">D5. Which type of variety from a burger</span>
<span style="left:29.5px;top:268.03px;font-size:7.3px;line-height:9.5px;color:#3a3a3a;width:117.3px;overflow:hidden;letter-spacing:-0.035px;">D6a. What makes a good quality beef patty</span>
<span style="left:20.3px;top:276.40px;font-size:11.5px;line-height:15.0px;color:#555;font-family:Liberation Serif,serif;">a</span>
<span style="left:29.5px;top:279.15px;font-size:7.3px;line-height:9.5px;color:#3a3a3a;width:117.3px;overflow:hidden;letter-spacing:-0.035px;">D6aOther. Other (Please list what else)</span>
<span class="li" style="left:29.5px;top:291.27px;font-size:7.3px;line-height:9.5px;color:#3a3a3a;letter-spacing:-0.348px;">D6b. Rank</span>
<span style="left:29.5px;top:302.39px;font-size:7.3px;line-height:9.5px;color:#3a3a3a;width:117.3px;overflow:hidden;letter-spacing:-0.035px;">D7a. What makes a great tasting beef patty</span>
<span style="left:20.3px;top:308.76px;font-size:11.5px;line-height:15.0px;color:#555;font-family:Liberation Serif,serif;">a</span>
<span style="left:29.5px;top:312.51px;font-size:7.3px;line-height:9.5px;color:#3a3a3a;width:117.3px;overflow:hidden;letter-spacing:-0.035px;">D7aOther. Other (Please list what else)</span>
<span class="li" style="left:29.5px;top:323.63px;font-size:7.3px;line-height:9.5px;color:#3a3a3a;letter-spacing:-0.348px;">D7b. Rank</span>
<span style="left:29.5px;top:334.75px;font-size:7.3px;line-height:9.5px;color:#3a3a3a;width:117.3px;overflow:hidden;letter-spacing:-0.035px;">D8a. What makes a good drive through</span>
<span style="left:20.3px;top:343.12px;font-size:11.5px;line-height:15.0px;color:#555;font-family:Liberation Serif,serif;">a</span>
<span style="left:29.5px;top:345.87px;font-size:7.3px;line-height:9.5px;color:#3a3a3a;width:117.3px;overflow:hidden;letter-spacing:-0.035px;">D8aOther. Other (Please list what else)</span>
<span class="li" style="left:29.5px;top:356.99px;font-size:7.3px;line-height:9.5px;color:#3a3a3a;letter-spacing:-0.348px;">D8b. Rank</span>
<span style="left:29.5px;top:368.11px;font-size:7.3px;line-height:9.5px;color:#3a3a3a;width:117.3px;overflow:hidden;letter-spacing:-0.035px;">D9a. What makes a good in-store experience</span>
<span style="left:20.3px;top:376.48px;font-size:11.5px;line-height:15.0px;color:#555;font-family:Liberation Serif,serif;">a</span>
<span style="left:29.5px;top:379.23px;font-size:7.3px;line-height:9.5px;color:#3a3a3a;width:117.3px;overflow:hidden;letter-spacing:-0.035px;">D9aOther. Other (Please list what else)</span>
<span class="li" style="left:29.5px;top:391.35px;font-size:7.3px;line-height:9.5px;color:#3a3a3a;letter-spacing:-0.348px;">D9b. Rank</span>
<span style="left:20.3px;top:397.72px;font-size:11.5px;line-height:15.0px;color:#555;font-family:Liberation Serif,serif;">a</span>
<span style="left:29.5px;top:402.47px;font-size:7.3px;line-height:9.5px;color:#3a3a3a;width:117.3px;overflow:hidden;letter-spacing:-0.035px;">E1. How would you describe Burger Chef</span>
<span class="li" style="left:29.5px;top:412.59px;font-size:7.3px;line-height:9.5px;color:#3a3a3a;letter-spacing:-0.195px;">E2. Burger Chef Ideal image</span>
<span style="left:29.5px;top:423.71px;font-size:7.3px;line-height:9.5px;color:#3a3a3a;width:117.3px;overflow:hidden;letter-spacing:-0.035px;">F1. Which of the following best describes</span>
<span style="left:29.5px;top:434.83px;font-size:7.3px;line-height:9.5px;color:#3a3a3a;width:117.3px;overflow:hidden;letter-spacing:-0.035px;">F2. Which of the following best describes</span>
<span style="left:29.5px;top:445.95px;font-size:7.3px;line-height:9.5px;color:#3a3a3a;width:117.3px;overflow:hidden;letter-spacing:-0.035px;">F3. What is the occupation of the household</span>
<span style="left:29.5px;top:457.07px;font-size:7.3px;line-height:9.5px;color:#3a3a3a;width:117.3px;overflow:hidden;letter-spacing:-0.035px;">F4. Which of the following best describes</span>
<span style="left:29.5px;top:468.19px;font-size:7.3px;line-height:9.5px;color:#3a3a3a;width:117.3px;overflow:hidden;letter-spacing:-0.035px;">F5. Which of the following best represents</span>
<span style="left:20.6px;top:478.61px;font-size:8.4px;line-height:10.9px;color:#444;">2</span>
<span class="li" style="left:29.5px;top:480.31px;font-size:7.3px;line-height:9.5px;color:#3a3a3a;letter-spacing:-0.221px;">F6. Postcode [f6_1]</span>
<span style="left:20.3px;top:486.68px;font-size:11.5px;line-height:15.0px;color:#b3ad86;font-family:Liberation Serif,serif;">a</span>
<span class="li" style="left:29.5px;top:491.43px;font-size:7.3px;line-height:9.5px;color:#b3ad86;letter-spacing:-0.186px;">Zone [Zone]</span>
<span style="left:449.8px;top:88.20px;font-size:11.7px;line-height:15.2px;color:#222;letter-spacing:-0.104px;">Pasting in Matching Variables from Excel</span>
<span style="left:390.9px;top:263.30px;font-size:10.6px;line-height:13.8px;color:#ffffff;font-weight:bold;letter-spacing:-0.138px;">Inserted variable</span>
<span class="h" style="left:164.2px;top:331.45px;font-size:9.5px;line-height:12.3px;color:#222;letter-spacing:-0.093px;">Data Editor</span>
<span style="left:226.8px;top:332.25px;font-size:7.3px;line-height:9.5px;color:#3a3a3a;letter-spacing:-0.193px;">U and A Example 1.sav</span>
<span style="left:665px;top:333.45px;font-size:7.3px;line-height:9.5px;color:#3a3a3a;letter-spacing:-0.144px;">Filter</span>
<span style="left:800px;top:331.25px;font-size:7.3px;line-height:9.5px;color:#3a3a3a;letter-spacing:-0.405px;">New</span>
<span style="left:832.8px;top:332.15px;font-size:7.3px;line-height:9.5px;color:#3a3a3a;letter-spacing:-0.443px;">Labels</span>
<span style="left:864.4px;top:332.15px;font-size:7.3px;line-height:9.5px;color:#3a3a3a;letter-spacing:-0.276px;">Values</span>
<span style="left:897.6px;top:332.15px;font-size:7.3px;line-height:9.5px;color:#aaaaaa;letter-spacing:-0.196px;">1245 rows</span>
<span style="left:162.2px;top:347.60px;font-size:7.2px;line-height:9.4px;color:#888;font-style:italic;">#</span>
<span style="left:194.0px;top:346.20px;font-size:9.7px;line-height:12.6px;color:#444;">2</span>
<span style="left:202.5px;top:347.55px;font-size:7.6px;line-height:9.9px;color:#555;letter-spacing:-0.327px;">f6_1</span>
<span style="left:247.8px;top:346.50px;font-size:8.0px;line-height:10.4px;color:#555;">f1</span>
<span style="left:282.0px;top:346.50px;font-size:8.0px;line-height:10.4px;color:#555;">f2</span>
<span style="left:316.5px;top:346.50px;font-size:8.0px;line-height:10.4px;color:#555;">f3</span>
<span style="left:351.0px;top:346.50px;font-size:8.0px;line-height:10.4px;color:#555;">f4</span>
<span style="left:385.5px;top:346.50px;font-size:8.0px;line-height:10.4px;color:#555;">f5</span>
<span style="left:411.0px;top:345.00px;font-size:11.5px;line-height:15.0px;color:#a8a37c;font-family:Liberation Serif,serif;">a</span>
<span style="left:420.8px;top:348.25px;font-size:7.8px;line-height:10.1px;color:#a8a37c;letter-spacing:-0.194px;">Zone</span>
<span style="left:162.1px;top:363.35px;font-size:7.8px;line-height:10.1px;color:#3c3c3c;letter-spacing:-0.22px;">2</span>
<span style="left:192px;top:363.35px;font-size:7.8px;line-height:10.1px;color:#3c3c3c;letter-spacing:-0.22px;">5063</span>
<span style="left:237.2px;top:363.35px;font-size:7.8px;line-height:10.1px;color:#3c3c3c;letter-spacing:-0.22px;">2</span>
<span style="left:271.6px;top:363.35px;font-size:7.8px;line-height:10.1px;color:#3c3c3c;letter-spacing:-0.22px;">1</span>
<span style="left:306.4px;top:363.35px;font-size:7.8px;line-height:10.1px;color:#3c3c3c;letter-spacing:-0.22px;">4</span>
<span style="left:341.2px;top:363.35px;font-size:7.8px;line-height:10.1px;color:#3c3c3c;letter-spacing:-0.22px;">5</span>
<span style="left:375.8px;top:363.35px;font-size:7.8px;line-height:10.1px;color:#3c3c3c;letter-spacing:-0.22px;">3</span>
<span style="left:409.9px;top:363.35px;font-size:7.8px;line-height:10.1px;color:#3c3c3c;letter-spacing:0.305px;">North</span>
<span style="left:162.1px;top:378.35px;font-size:7.8px;line-height:10.1px;color:#3c3c3c;letter-spacing:-0.22px;">3</span>
<span style="left:192px;top:378.35px;font-size:7.8px;line-height:10.1px;color:#3c3c3c;letter-spacing:-0.22px;">2747</span>
<span style="left:237.2px;top:378.35px;font-size:7.8px;line-height:10.1px;color:#3c3c3c;letter-spacing:-0.22px;">8</span>
<span style="left:271.6px;top:378.35px;font-size:7.8px;line-height:10.1px;color:#3c3c3c;letter-spacing:-0.22px;">2</span>
<span style="left:306.4px;top:378.35px;font-size:7.8px;line-height:10.1px;color:#3c3c3c;letter-spacing:-0.22px;">1</span>
<span style="left:341.2px;top:378.35px;font-size:7.8px;line-height:10.1px;color:#3c3c3c;letter-spacing:-0.22px;">5</span>
<span style="left:375.8px;top:378.35px;font-size:7.8px;line-height:10.1px;color:#3c3c3c;letter-spacing:-0.22px;">1</span>
<span style="left:409.9px;top:378.35px;font-size:7.8px;line-height:10.1px;color:#3c3c3c;letter-spacing:-0.005px;">North East</span>
<span style="left:162.1px;top:392.65px;font-size:7.8px;line-height:10.1px;color:#3c3c3c;letter-spacing:-0.22px;">4</span>
<span style="left:192px;top:392.65px;font-size:7.8px;line-height:10.1px;color:#3c3c3c;letter-spacing:-0.22px;">2049</span>
<span style="left:237.2px;top:392.65px;font-size:7.8px;line-height:10.1px;color:#3c3c3c;letter-spacing:-0.22px;">2</span>
<span style="left:271.6px;top:392.65px;font-size:7.8px;line-height:10.1px;color:#3c3c3c;letter-spacing:-0.22px;">2</span>
<span style="left:306.4px;top:392.65px;font-size:7.8px;line-height:10.1px;color:#3c3c3c;letter-spacing:-0.22px;">1</span>
<span style="left:341.2px;top:392.65px;font-size:7.8px;line-height:10.1px;color:#3c3c3c;letter-spacing:-0.22px;">5</span>
<span style="left:375.8px;top:392.65px;font-size:7.8px;line-height:10.1px;color:#3c3c3c;letter-spacing:-0.22px;">9</span>
<span style="left:409.9px;top:392.65px;font-size:7.8px;line-height:10.1px;color:#3c3c3c;letter-spacing:-0.023px;">South</span>
<span style="left:162.1px;top:409.15px;font-size:7.8px;line-height:10.1px;color:#3c3c3c;letter-spacing:-0.22px;">5</span>
<span style="left:192px;top:409.15px;font-size:7.8px;line-height:10.1px;color:#3c3c3c;letter-spacing:-0.22px;">4074</span>
<span style="left:237.2px;top:409.15px;font-size:7.8px;line-height:10.1px;color:#3c3c3c;letter-spacing:-0.22px;">6</span>
<span style="left:271.6px;top:409.15px;font-size:7.8px;line-height:10.1px;color:#3c3c3c;letter-spacing:-0.22px;">2</span>
<span style="left:306.4px;top:409.15px;font-size:7.8px;line-height:10.1px;color:#3c3c3c;letter-spacing:-0.22px;">1</span>
<span style="left:341.2px;top:409.15px;font-size:7.8px;line-height:10.1px;color:#3c3c3c;letter-spacing:-0.22px;">5</span>
<span style="left:375.8px;top:409.15px;font-size:7.8px;line-height:10.1px;color:#3c3c3c;letter-spacing:-0.22px;">7</span>
<span style="left:409.9px;top:409.15px;font-size:7.8px;line-height:10.1px;color:#3c3c3c;letter-spacing:-0.023px;">South</span>
<span style="left:162.1px;top:423.85px;font-size:7.8px;line-height:10.1px;color:#3c3c3c;letter-spacing:-0.22px;">6</span>
<span style="left:192px;top:423.85px;font-size:7.8px;line-height:10.1px;color:#3c3c3c;letter-spacing:-0.22px;">4500</span>
<span style="left:237.2px;top:423.85px;font-size:7.8px;line-height:10.1px;color:#3c3c3c;letter-spacing:-0.22px;">9</span>
<span style="left:271.6px;top:423.85px;font-size:7.8px;line-height:10.1px;color:#3c3c3c;letter-spacing:-0.22px;">1</span>
<span style="left:306.4px;top:423.85px;font-size:7.8px;line-height:10.1px;color:#3c3c3c;letter-spacing:-0.22px;">8</span>
<span style="left:341.2px;top:423.85px;font-size:7.8px;line-height:10.1px;color:#3c3c3c;letter-spacing:-0.22px;">3</span>
<span style="left:375.8px;top:423.85px;font-size:7.8px;line-height:10.1px;color:#3c3c3c;letter-spacing:-0.22px;">2</span>
<span style="left:409.9px;top:423.85px;font-size:7.8px;line-height:10.1px;color:#3c3c3c;letter-spacing:0.305px;">North</span>
<span style="left:162.1px;top:440.45px;font-size:7.8px;line-height:10.1px;color:#3c3c3c;letter-spacing:-0.22px;">7</span>
<span style="left:192px;top:440.45px;font-size:7.8px;line-height:10.1px;color:#3c3c3c;letter-spacing:-0.22px;">3105</span>
<span style="left:237.2px;top:440.45px;font-size:7.8px;line-height:10.1px;color:#3c3c3c;letter-spacing:-0.22px;">9</span>
<span style="left:271.6px;top:440.45px;font-size:7.8px;line-height:10.1px;color:#3c3c3c;letter-spacing:-0.22px;">2</span>
<span style="left:306.4px;top:440.45px;font-size:7.8px;line-height:10.1px;color:#3c3c3c;letter-spacing:-0.22px;">1</span>
<span style="left:341.2px;top:440.45px;font-size:7.8px;line-height:10.1px;color:#3c3c3c;letter-spacing:-0.22px;">5</span>
<span style="left:375.8px;top:440.45px;font-size:7.8px;line-height:10.1px;color:#3c3c3c;letter-spacing:-0.22px;">5</span>
<span style="left:409.9px;top:440.45px;font-size:7.8px;line-height:10.1px;color:#3c3c3c;letter-spacing:0.305px;">North</span>
<span style="left:162.1px;top:454.95px;font-size:7.8px;line-height:10.1px;color:#3c3c3c;letter-spacing:-0.22px;">8</span>
<span style="left:192px;top:454.95px;font-size:7.8px;line-height:10.1px;color:#3c3c3c;letter-spacing:-0.22px;">3149</span>
<span style="left:237.2px;top:454.95px;font-size:7.8px;line-height:10.1px;color:#3c3c3c;letter-spacing:-0.22px;">7</span>
<span style="left:271.6px;top:454.95px;font-size:7.8px;line-height:10.1px;color:#3c3c3c;letter-spacing:-0.22px;">3</span>
<span style="left:306.4px;top:454.95px;font-size:7.8px;line-height:10.1px;color:#3c3c3c;letter-spacing:-0.22px;">4</span>
<span style="left:341.2px;top:454.95px;font-size:7.8px;line-height:10.1px;color:#3c3c3c;letter-spacing:-0.22px;">5</span>
<span style="left:375.8px;top:454.95px;font-size:7.8px;line-height:10.1px;color:#3c3c3c;letter-spacing:-0.22px;">6</span>
<span style="left:409.9px;top:454.95px;font-size:7.8px;line-height:10.1px;color:#3c3c3c;letter-spacing:-0.142px;">West</span>
<span style="left:162.1px;top:471.45px;font-size:7.8px;line-height:10.1px;color:#3c3c3c;letter-spacing:-0.22px;">9</span>
<span style="left:192px;top:471.45px;font-size:7.8px;line-height:10.1px;color:#3c3c3c;letter-spacing:-0.22px;">2026</span>
<span style="left:237.2px;top:471.45px;font-size:7.8px;line-height:10.1px;color:#3c3c3c;letter-spacing:-0.22px;">6</span>
<span style="left:271.6px;top:471.45px;font-size:7.8px;line-height:10.1px;color:#3c3c3c;letter-spacing:-0.22px;">2</span>
<span style="left:306.4px;top:471.45px;font-size:7.8px;line-height:10.1px;color:#3c3c3c;letter-spacing:-0.22px;">6</span>
<span style="left:341.2px;top:471.45px;font-size:7.8px;line-height:10.1px;color:#3c3c3c;letter-spacing:-0.22px;">5</span>
<span style="left:375.8px;top:471.45px;font-size:7.8px;line-height:10.1px;color:#3c3c3c;letter-spacing:-0.22px;">5</span>
<span style="left:409.9px;top:471.45px;font-size:7.8px;line-height:10.1px;color:#3c3c3c;letter-spacing:-0.142px;">West</span>
<span style="left:162.1px;top:485.85px;font-size:7.8px;line-height:10.1px;color:#3c3c3c;letter-spacing:-0.22px;">10</span>
<span style="left:192px;top:485.85px;font-size:7.8px;line-height:10.1px;color:#3c3c3c;letter-spacing:-0.22px;">2326</span>
<span style="left:237.2px;top:485.85px;font-size:7.8px;line-height:10.1px;color:#3c3c3c;letter-spacing:-0.22px;">5</span>
<span style="left:271.6px;top:485.85px;font-size:7.8px;line-height:10.1px;color:#3c3c3c;letter-spacing:-0.22px;">2</span>
<span style="left:306.4px;top:485.85px;font-size:7.8px;line-height:10.1px;color:#3c3c3c;letter-spacing:-0.22px;">1</span>
<span style="left:341.2px;top:485.85px;font-size:7.8px;line-height:10.1px;color:#3c3c3c;letter-spacing:-0.22px;">5</span>
<span style="left:375.8px;top:485.85px;font-size:7.8px;line-height:10.1px;color:#3c3c3c;letter-spacing:-0.22px;">7</span>
<span style="left:409.9px;top:485.85px;font-size:7.8px;line-height:10.1px;color:#3c3c3c;letter-spacing:-0.023px;">South</span>
<span style="left:191.4px;top:368.90px;font-size:6.6px;line-height:8.6px;color:#fbfbf0;font-weight:bold;letter-spacing:-0.259px;">F6. Postcode</span>
<span class="m" style="left:279.7px;top:354.50px;font-size:8.3px;line-height:10.8px;color:#222;letter-spacing:-0.025px;z-index:7;">Copy</span>
<span class="m" style="left:279.7px;top:368.60px;font-size:8.3px;line-height:10.8px;color:#8f9070;letter-spacing:-0.108px;z-index:7;">Insert New Variable(s)</span>
<span class="m" style="left:279.7px;top:383.10px;font-size:8.3px;line-height:10.8px;color:#222;letter-spacing:-0.093px;z-index:7;">Hide</span>
<span class="m" style="left:279.7px;top:396.50px;font-size:8.3px;line-height:10.8px;color:#222;letter-spacing:-0.051px;z-index:7;">Hide Other Columns</span>
</div></body></html>
